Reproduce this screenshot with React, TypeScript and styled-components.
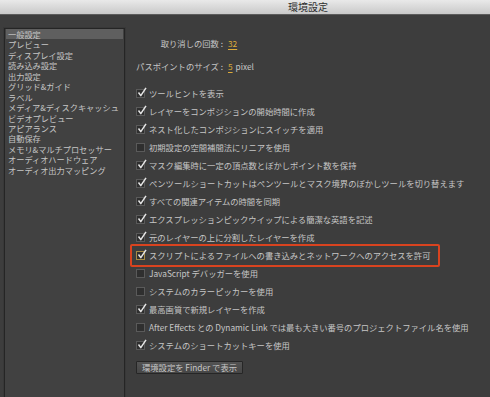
import React from "react"
import styled, { createGlobalStyle } from "styled-components"

const GlobalStyle = createGlobalStyle`
  html, body {
    margin: 0;
    padding: 0;
    background: #3d3d3d;
  }
  body {
    width: 490px;
    height: 397px;
    overflow: hidden;
    font-family: "Noto Sans CJK JP", "Noto Sans", sans-serif;
  }
`

const colors = {
  bg: "#3d3d3d",
  panel: "#414141",
  border: "#252525",
  text: "#c6c6c6",
  accent: "#dcaa3a",
  red: "#d9431f",
}

const Window = styled.div`
  display: flex;
  flex-direction: column;
  width: 490px;
  height: 397px;
  background: ${colors.bg};
`

const TitleBar = styled.div`
  display: flex;
  justify-content: center;
  align-items: center;
  height: 14px;
  padding-left: 126px;
  background: linear-gradient(#e9e9e9, #c9c9c9);
  border-bottom: 1px solid #5c5c5c;
  color: #2e2e2e;
  font-size: 10px;
  line-height: 14px;
`

const Body = styled.div`
  display: flex;
  flex: 1;
  min-height: 0;
`

const Sidebar = styled.ul`
  list-style: none;
  margin: 13px 0 0 4px;
  padding: 0 1px;
  width: 117px;
  background: ${colors.panel};
  border: 1px solid ${colors.border};
  border-bottom: none;
  box-shadow: 0 0 0 1px #383838;
`

const SideItem = styled.li<{ $active?: boolean }>`
  height: 10.45px;
  line-height: 10.45px;
  padding-left: 2px;
  font-size: 8.2px;
  color: ${colors.text};
  white-space: nowrap;
  overflow: hidden;
  background: ${(p) => (p.$active ? "#5f5f5f" : "transparent")};
`

const Main = styled.div`
  display: flex;
  flex-direction: column;
  align-items: flex-start;
  padding: 16px 0 0 11px;
  font-size: 8.3px;
  color: ${colors.text};
`

const Fields = styled.div`
  display: grid;
  grid-template-columns: 87px auto;
  grid-auto-rows: 23px;
  column-gap: 5px;
  align-items: center;
  margin-bottom: 7px;
`

const FieldLabel = styled.span`
  text-align: right;
  white-space: nowrap;
`

const FieldValue = styled.span`
  display: flex;
  gap: 3px;
  white-space: nowrap;
`

const Num = styled.span`
  color: ${colors.accent};
  text-decoration: underline;
  text-underline-offset: 2px;
`

const Options = styled.div`
  display: flex;
  flex-direction: column;
  align-items: flex-start;
`

const Row = styled.label<{ $marked?: boolean }>`
  position: relative;
  display: flex;
  align-items: center;
  gap: 4px;
  height: 18px;
  white-space: nowrap;

  ${(p) =>
    p.$marked &&
    `
    &::after {
      content: "";
      position: absolute;
      top: -2px;
      bottom: -3px;
      left: -6px;
      right: -10px;
      border: 2px solid ${colors.red};
      border-radius: 2px;
    }
  `}
`

const Box = styled.span<{ $focus?: boolean }>`
  position: relative;
  flex: none;
  width: 7px;
  height: 7px;
  background: #2f2f2f;
  border: 1px solid ${(p) => (p.$focus ? "#a48a45" : "#5a5a5a")};
`

const Tick = styled.svg`
  position: absolute;
  left: 0px;
  top: -3px;
  width: 10px;
  height: 10px;
  overflow: visible;
`

const Button = styled.button`
  margin-top: 7px;
  height: 13px;
  padding: 0 5px;
  background: linear-gradient(#535353, #464646);
  border: 1px solid #262626;
  border-radius: 1px;
  color: ${colors.text};
  font-family: inherit;
  font-size: 8.3px;
  line-height: 11px;
  white-space: nowrap;
`

const sideItems = [
  "一般設定",
  "プレビュー",
  "ディスプレイ設定",
  "読み込み設定",
  "出力設定",
  "グリッド&ガイド",
  "ラベル",
  "メディア&ディスクキャッシュ",
  "ビデオプレビュー",
  "アピアランス",
  "自動保存",
  "メモリ&マルチプロセッサー",
  "オーディオハードウェア",
  "オーディオ出力マッピング",
]

const options: { text: string; checked: boolean; marked?: boolean }[] = [
  { text: "ツールヒントを表示", checked: true },
  { text: "レイヤーをコンポジションの開始時間に作成", checked: true },
  { text: "ネスト化したコンポジションにスイッチを適用", checked: true },
  { text: "初期設定の空間補間法にリニアを使用", checked: false },
  { text: "マスク編集時に一定の頂点数とぼかしポイント数を保持", checked: true },
  { text: "ペンツールショートカットはペンツールとマスク境界のぼかしツールを切り替えます", checked: true },
  { text: "すべての関連アイテムの時間を同期", checked: true },
  { text: "エクスプレッションピックウイップによる簡潔な英語を記述", checked: true },
  { text: "元のレイヤーの上に分割したレイヤーを作成", checked: true },
  { text: "スクリプトによるファイルへの書き込みとネットワークへのアクセスを許可", checked: true, marked: true },
  { text: "JavaScript デバッガーを使用", checked: false },
  { text: "システムのカラーピッカーを使用", checked: false },
  { text: "最高画質で新規レイヤーを作成", checked: true },
  { text: "After Effects との Dynamic Link では最も大きい番号のプロジェクトファイル名を使用", checked: false },
  { text: "システムのショートカットキーを使用", checked: true },
]

const Checkbox = ({ checked, focus }: { checked: boolean; focus?: boolean }) => (
  <Box $focus={focus}>
    {checked && (
      <Tick viewBox="0 0 10 10">
        <path d="M1.5 5.5 L3.8 8.6 L9 0.8" fill="none" stroke="#e6e6e6" strokeWidth="1.5" strokeLinejoin="round" />
      </Tick>
    )}
  </Box>
)

const App = () => {
  return (
    <Window>
      <GlobalStyle />
      <TitleBar>環境設定</TitleBar>
      <Body>
        <Sidebar>
          {sideItems.map((item, i) => (
            <SideItem key={item} $active={i === 0}>
              {item}
            </SideItem>
          ))}
        </Sidebar>
        <Main>
          <Fields>
            <FieldLabel>取り消しの回数 :</FieldLabel>
            <FieldValue>
              <Num>32</Num>
            </FieldValue>
            <FieldLabel>パスポイントのサイズ :</FieldLabel>
            <FieldValue>
              <Num>5</Num>
              <span>pixel</span>
            </FieldValue>
          </Fields>
          <Options>
            {options.map((o) => (
              <Row key={o.text} $marked={o.marked}>
                <Checkbox checked={o.checked} focus={o.marked} />
                <span>{o.text}</span>
              </Row>
            ))}
          </Options>
          <Button>環境設定を Finder で表示</Button>
        </Main>
      </Body>
    </Window>
  )
}

export default App
